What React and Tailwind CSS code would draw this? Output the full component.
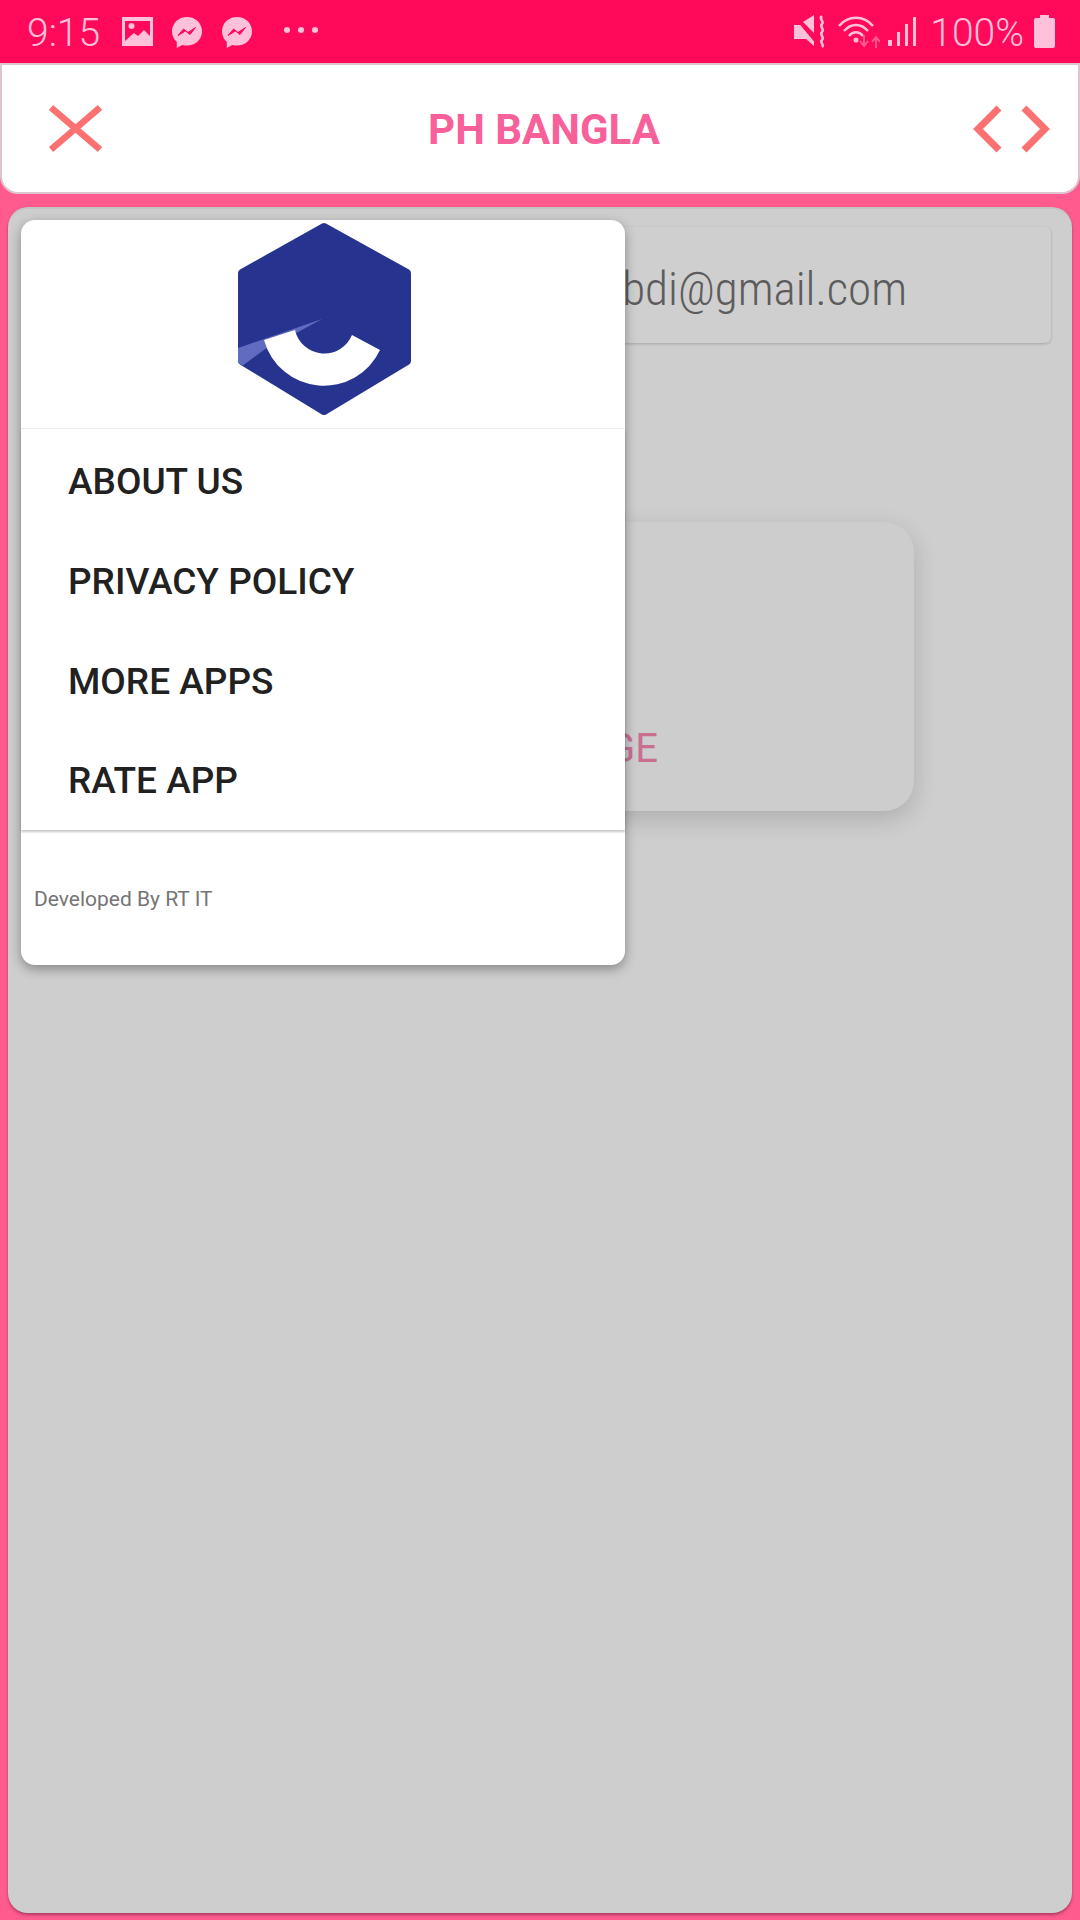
// Messenger bubble from the status bar
function MessengerIcon() {
  return (
    <svg width="32" height="33" viewBox="0 0 32 33">
      <path d="M16 1C7.500 1 1 7.200 1 15.300c0 4.300 1.800 8 4.800 10.600V32l5.400-3c1.500.4 3.100.6 4.800.6 8.500 0 15-6.200 15-14.300S24.500 1 16 1z" fill="#ffc0da" />
      <path d="M7 19.500l5.500-6.500 4.500 3.500 7.500-5-5.500 7-4.500-3.500z" fill="#ff0a5a" stroke="#ff0a5a" strokeWidth="1" />
    </svg>
  );
}

function StatusBar() {
  return (
    <div className="h-[63px] shrink-0 bg-[#ff0a5a] flex items-center justify-between pl-[27px] pr-[25px] pt-[3px] text-[#ffc0da] font-['Roboto',sans-serif] font-light text-[39px]">
      <div className="flex items-center">
        <span className="leading-none">9:15</span>
        <svg width="31" height="29" viewBox="0 0 31 29" className="ml-[22px] -mt-[3px]">
          <path d="M0 0h31v29H0z" fill="#ffc0da" />
          <path d="M3 4h25v15l-6-6-6 6-4-3-9 8z" fill="#ff0a5a" />
          <circle cx="9.500" cy="9" r="3" fill="#ffc0da" />
        </svg>
        <div className="ml-[18px] -mt-[2px]"><MessengerIcon /></div>
        <div className="ml-[18px] -mt-[2px]"><MessengerIcon /></div>
        <div className="ml-[31px] -mt-[6px] flex gap-[8px]">
          <div className="w-[6px] h-[6px] rounded-full bg-[#ffc0da]" />
          <div className="w-[6px] h-[6px] rounded-full bg-[#ffc0da]" />
          <div className="w-[6px] h-[6px] rounded-full bg-[#ffc0da]" />
        </div>
      </div>
      <div className="flex items-center">
        {/* muted + vibrate */}
        <svg width="32" height="33" viewBox="0 0 32 33" className="-mt-[3px]">
          <path d="M0 10h6l1-1 13 15v7l-8-7H0z" fill="#ffc0da" />
          <path d="M9 7l11-7v18z" fill="#ffc0da" />
          <path d="M1 2l20 24" stroke="#ff0a5a" strokeWidth="2" />
          <path d="M28 1c-4 3 3 5 0 8s3 5 0 8 3 5 0 8 3 4 0 7" fill="none" stroke="#ffc0da" strokeWidth="2.500" />
        </svg>
        {/* wifi */}
        <svg width="42" height="36" viewBox="0 0 42 36" className="ml-[12px] -mt-[3px]">
          <path d="M1 12C10 1 26 1 35 12" fill="none" stroke="#ffc0da" strokeWidth="2.500" />
          <path d="M6 17c7-8 17-8 24 0" fill="none" stroke="#ffc0da" strokeWidth="2.500" />
          <path d="M11 22c4-5 10-5 14 0" fill="none" stroke="#ffc0da" strokeWidth="2.500" />
          <circle cx="18" cy="26" r="2.500" fill="#ffc0da" />
          <path d="M26 21v10m-4-4l4 5 4-5M38 34V24m-4 4l4-5 4 5" fill="none" stroke="#ff5b8f" strokeWidth="2" />
        </svg>
        {/* signal */}
        <svg width="28" height="31" viewBox="0 0 28 31" className="ml-[8px] -mt-[3px]">
          <rect x="0" y="24" width="4" height="6" fill="#ffc0da" />
          <rect x="9" y="16" width="3" height="14" fill="#ffc0da" />
          <rect x="17" y="8" width="3" height="22" fill="#ffc0da" />
          <rect x="25" y="1" width="3" height="29" fill="#ffc0da" />
        </svg>
        <span className="ml-[14px] leading-none">100%</span>
        <svg width="21" height="33" viewBox="0 0 21 33" className="ml-[10px] -mt-[3px]">
          <path d="M6 0h9v3h4a2 2 0 0 1 2 2v26a2 2 0 0 1-2 2H2a2 2 0 0 1-2-2V5a2 2 0 0 1 2-2h4z" fill="#ffc0da" />
        </svg>
      </div>
    </div>
  );
}

function Header() {
  return (
    <div className="h-[131px] shrink-0 bg-white rounded-b-[18px] border-x-2 border-y-2 border-[#dcc5ce] flex items-center justify-between pl-[46px] pr-[28px] font-['Roboto',sans-serif]">
      <svg width="55" height="47" viewBox="0 0 55 47">
        <path d="M3 2.500L52 44.500M52 2.500L3 44.500" stroke="#fb7070" strokeWidth="6.500" fill="none" />
      </svg>
      <h1 className="text-[42px] font-bold text-[#f8609a] leading-none mt-[3px] ml-[12px]">PH BANGLA</h1>
      <div className="flex items-center gap-[19px]">
        <svg width="29" height="48" viewBox="0 0 29 48">
          <path d="M26 3L5 24l21 21" stroke="#fb7070" strokeWidth="7" fill="none" />
        </svg>
        <svg width="29" height="48" viewBox="0 0 29 48">
          <path d="M3 3l21 21L3 45" stroke="#fb7070" strokeWidth="7" fill="none" />
        </svg>
      </div>
    </div>
  );
}

function Logo() {
  return (
    <svg width="240" height="235" viewBox="0 0 240 235">
      <polygon points="124,23 207,69 207,157 124,207 42,157 42,69" fill="#27348f" stroke="#27348f" strokeWidth="8" strokeLinejoin="round" />
      <path d="M38 144L122 115 100 127 68 143 42 162 38 158z" fill="#5f6cc0" />
      <path d="M64 136L95 126A30 30 0 0 0 152 131L180 146A62 62 0 0 1 64 136z" fill="#fff" />
    </svg>
  );
}

function Menu() {
  const items = ["ABOUT US", "PRIVACY POLICY", "MORE APPS", "RATE APP"];
  return (
    <div className="absolute left-[13px] top-[11px] w-[604px] h-[745px] bg-white rounded-[14px] shadow-[0_4px_12px_rgba(0,0,0,0.35)] flex flex-col font-['Roboto',sans-serif]">
      <div className="h-[209px] shrink-0 border-b border-[#ededed] flex justify-center">
        <div className="-mt-[16px] -ml-[7px]">
          <Logo />
        </div>
      </div>
      <ul className="h-[401px] shrink-0 pt-[3px] shadow-[0_2px_2px_rgba(0,0,0,0.22)]">
        {items.map((item) => (
          <li key={item} className="h-[100px] last:h-[98px] flex items-center pl-[47px] text-[37px] font-medium text-[#212121]">
            {item}
          </li>
        ))}
      </ul>
      <div className="flex-1 pl-[13px] pt-[55px] text-[21px] leading-[28px] text-[#757575]">
        Developed By RT IT
      </div>
    </div>
  );
}

export default function App() {
  return (
    <div className="w-[1080px] h-[1920px] bg-[#ff5b8f] flex flex-col overflow-hidden">
      <StatusBar />
      <Header />
      <div className="relative mt-[13px] mx-[8px] h-[1706px] bg-[#cecece] rounded-[20px] border-t-2 border-[#c4c4c4] shadow-[0_2px_3px_rgba(120,40,70,0.6)] flex flex-col items-center font-['Roboto',sans-serif]">
        <div className="mt-[18px] w-[1022px] h-[116px] rounded-[6px] bg-[#cfcfcf] shadow-[0_1px_3px_rgba(0,0,0,0.2)] flex items-center justify-end pr-[144px]">
          <span className="text-[47px] font-light text-[#5c5c5c] [font-stretch:75%] leading-none mt-[6px]">contact.phbdi@gmail.com</span>
        </div>
        <div className="mt-[179px] w-[748px] h-[289px] rounded-[30px] bg-[#cdcdcd] shadow-[0_8px_24px_rgba(0,0,0,0.16)] flex items-end justify-end pr-[256px] pb-[42px]">
          <span className="text-[40px] text-[#c9708f] leading-none">SEND MESSAGE</span>
        </div>
        <Menu />
      </div>
    </div>
  );
}
